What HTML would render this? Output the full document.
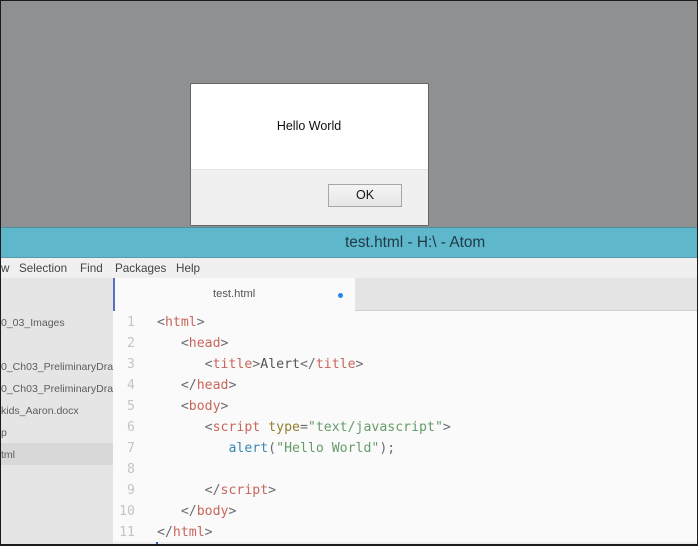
<!DOCTYPE html>
<html lang="en">
<head>
<meta charset="utf-8">
<title>Alert</title>
<style>
html,body{margin:0;padding:0}
body{width:698px;height:546px;overflow:hidden;position:relative;background:#8f9092;font-family:"Liberation Sans",sans-serif}
div,span{position:absolute;white-space:pre}
.code span{position:static}
.code{left:157px;font:13.2px/21px "DejaVu Sans Mono",monospace;color:#555;height:21px}
.t{color:#c9665c}.p{color:#6a6b70}.a{color:#94802f}.s{color:#669c69}.f{color:#3a86b5}
.n{font:13.2px/21px "DejaVu Sans Mono",monospace;color:#c4c4c4;width:22px;left:113px;text-align:right;height:21px}
.side{left:1px;width:112px;overflow:hidden;font-size:10.5px;line-height:21px;height:21px;color:#5c5c5c}
.m{top:260.5px;font-size:11.7px;line-height:16px;color:#444}
</style>
</head>
<body>
<div style="left:0;top:0;width:698px;height:227px;background-color:#8f9092;background-image:conic-gradient(rgba(255,255,255,.015) 25%,rgba(0,0,0,.015) 0 50%,rgba(255,255,255,.015) 0 75%,rgba(0,0,0,.015) 0);background-size:4px 4px"></div>

<div style="left:190px;top:83px;width:237px;height:141px;background:#fff;border:1px solid #666;border-radius:2px"></div>
<div style="left:191px;top:169px;width:237px;height:56px;background:#f0f0f0;border-top:1px solid #e3e3e3;box-sizing:border-box"></div>
<div style="left:191px;top:118px;width:236px;text-align:center;font-size:12.5px;line-height:16px;color:#111">Hello World</div>
<div style="left:328px;top:184px;width:74px;height:23px;box-sizing:border-box;border:1px solid #a6a6a6;background:linear-gradient(#f4f4f4,#e6e6e6);text-align:center;font-size:12.5px;line-height:21px;color:#111">OK</div>

<div style="left:0;top:227px;width:698px;height:31px;background:#5fb7cb;border-top:1px solid #4e8e9e;border-bottom:1px solid #5a9aab;box-sizing:border-box"></div>
<div style="left:345px;top:234px;font-size:15.4px;line-height:18px;color:#1f3a44">test.html - H:\ - Atom</div>

<div style="left:0;top:258px;width:698px;height:20px;background:#f0f0f0"></div>
<div class="m" style="left:1px">w</div>
<div class="m" style="left:19px">Selection</div>
<div class="m" style="left:80px">Find</div>
<div class="m" style="left:115px">Packages</div>
<div class="m" style="left:176px">Help</div>

<div style="left:0;top:278px;width:113px;height:268px;background:#e5e5e5"></div>
<div style="left:0;top:443px;width:113px;height:22px;background:#d8d8d8"></div>
<div class="side" style="top:313px">0_03_Images</div>
<div class="side" style="top:357px">0_Ch03_PreliminaryDraft</div>
<div class="side" style="top:379px">0_Ch03_PreliminaryDraft</div>
<div class="side" style="top:401px">kids_Aaron.docx</div>
<div class="side" style="top:423px">p</div>
<div class="side" style="top:445px">tml</div>

<div style="left:113px;top:278px;width:585px;height:268px;background:#fafafa"></div>
<div style="left:355px;top:278px;width:343px;height:33px;background:#e4e4e4;border-bottom:1px solid #cfcfcf;box-sizing:border-box"></div>
<div style="left:113px;top:278px;width:2px;height:33px;background:#5a6fc0"></div>
<div style="left:213px;top:287px;font-size:11.2px;line-height:14px;color:#555">test.html</div>
<div style="left:338px;top:293px;width:5px;height:5px;border-radius:50%;background:#2188f0"></div>

<div class="n" style="top:312px">1</div>
<div class="n" style="top:333px">2</div>
<div class="n" style="top:354px">3</div>
<div class="n" style="top:375px">4</div>
<div class="n" style="top:396px">5</div>
<div class="n" style="top:417px">6</div>
<div class="n" style="top:438px">7</div>
<div class="n" style="top:459px">8</div>
<div class="n" style="top:480px">9</div>
<div class="n" style="top:501px">10</div>
<div class="n" style="top:522px">11</div>

<div class="code" style="top:312px"><span class="p">&lt;</span><span class="t">html</span><span class="p">&gt;</span></div>
<div class="code" style="top:333px">   <span class="p">&lt;</span><span class="t">head</span><span class="p">&gt;</span></div>
<div class="code" style="top:354px">      <span class="p">&lt;</span><span class="t">title</span><span class="p">&gt;</span>Alert<span class="p">&lt;/</span><span class="t">title</span><span class="p">&gt;</span></div>
<div class="code" style="top:375px">   <span class="p">&lt;/</span><span class="t">head</span><span class="p">&gt;</span></div>
<div class="code" style="top:396px">   <span class="p">&lt;</span><span class="t">body</span><span class="p">&gt;</span></div>
<div class="code" style="top:417px">      <span class="p">&lt;</span><span class="t">script</span> <span class="a">type</span><span class="p">=</span><span class="s">"text/javascript"</span><span class="p">&gt;</span></div>
<div class="code" style="top:438px">         <span class="f">alert</span><span class="p">(</span><span class="s">"Hello World"</span><span class="p">);</span></div>
<div class="code" style="top:480px">      <span class="p">&lt;/</span><span class="t">script</span><span class="p">&gt;</span></div>
<div class="code" style="top:501px">   <span class="p">&lt;/</span><span class="t">body</span><span class="p">&gt;</span></div>
<div class="code" style="top:522px"><span class="p">&lt;/</span><span class="t">html</span><span class="p">&gt;</span></div>

<div style="left:113px;top:542px;width:585px;height:2px;background:#ededed"></div>
<div style="left:156px;top:542px;width:2px;height:2px;background:#3d55c0"></div>

<div style="left:0;top:0;width:698px;height:546px;box-sizing:border-box;border:1px solid #1a1a1a;border-bottom-width:2px"></div>
</body>
</html>
